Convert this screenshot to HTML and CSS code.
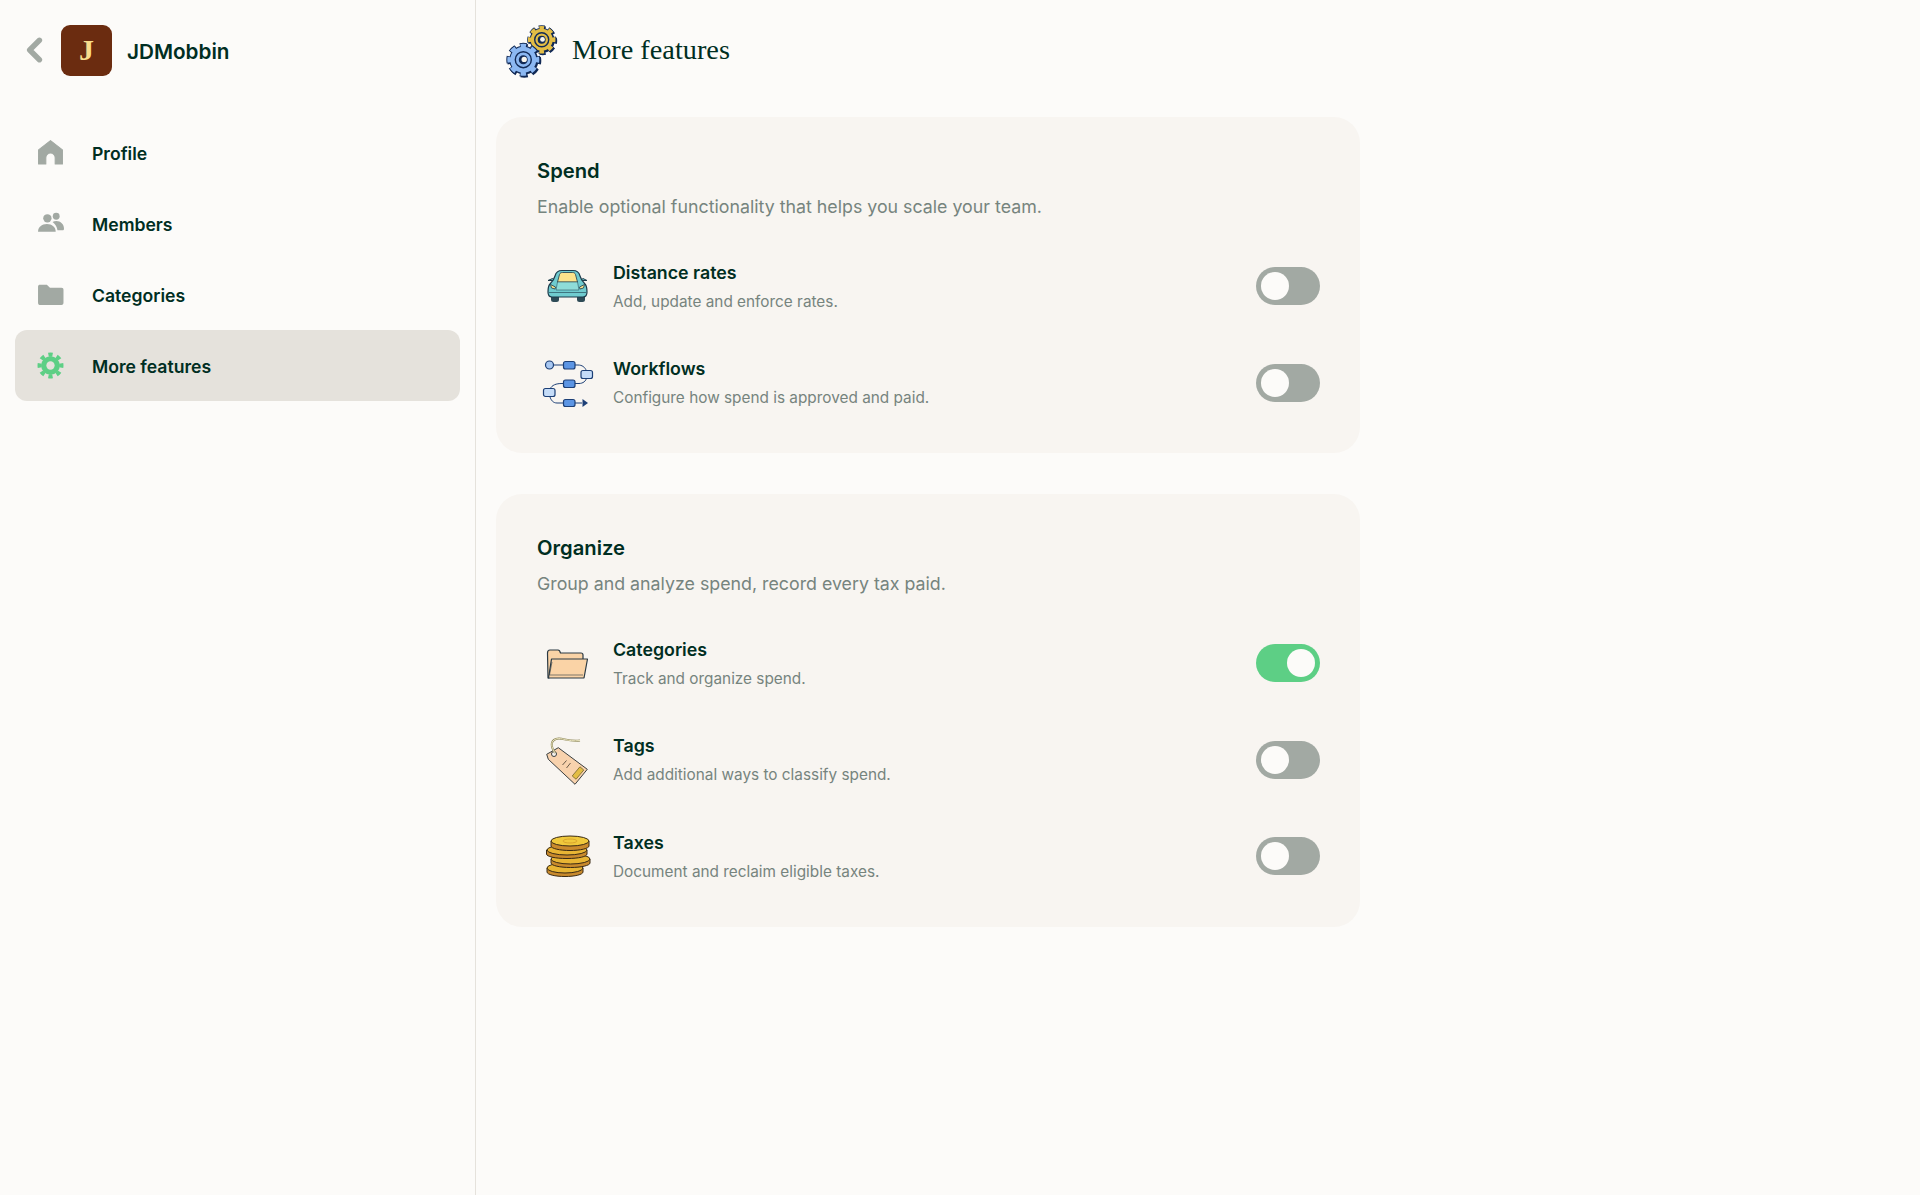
FILE: index.html
```html
<!DOCTYPE html>
<html lang="en">
<head>
    <meta charset="UTF-8">
    <meta name="viewport" content="width=device-width, initial-scale=1.0">
    <title>More features</title>
    <link rel="stylesheet" href="styles.css">
</head>
<body>
    <aside class="sidebar">
        <div class="workspace">
            <svg class="back" viewBox="0 0 16 24"><path d="M13 3 4 12l9 9" fill="none" stroke="#a2a9a3" stroke-width="5" stroke-linecap="round" stroke-linejoin="round"/></svg>
            <div class="avatar">J</div>
            <div class="workspace-name">JDMobbin</div>
        </div>
        <nav class="nav">
            <a class="nav-item">
                <svg class="nav-icon" viewBox="0 0 26 26"><path d="M13 1.500 24.500 10.500V24H17.500V18A4.500 4.500 0 0 0 8.500 18V24H1.500V10.500Z" fill="#a2a9a3" stroke="#a2a9a3" stroke-linejoin="round"/></svg>
                <span>Profile</span>
            </a>
            <a class="nav-item">
                <svg class="nav-icon" viewBox="0 0 26 26"><circle cx="10" cy="8" r="4" fill="#a2a9a3"/><circle cx="18.500" cy="6" r="3.300" fill="#a2a9a3"/><path d="M1 21c0-4.500 3.500-7.500 8.500-7.500s8.500 3 8.500 7.500z" fill="#a2a9a3"/><path d="M15 11.500c1-.7 2.300-1 3.700-1 4 0 7.300 3 7.300 7.500 0 1-.5 1.500-1.500 1.500h-4.800c-.3-3.200-2-6-4.700-8z" fill="#a2a9a3"/></svg>
                <span>Members</span>
            </a>
            <a class="nav-item">
                <svg class="nav-icon" viewBox="0 0 26 26"><path d="M1 5.500C1 4 1.800 3.500 3 3.500H9.500L12.500 6.500H23.500C25 6.500 25.500 7.300 25.500 8.500V21C25.500 22.200 25 23 23.500 23H2.500C1.500 23 1 22.200 1 21Z" fill="#a2a9a3"/></svg>
                <span>Categories</span>
            </a>
            <a class="nav-item nav-item-active">
                <svg class="nav-icon" viewBox="0 0 26 26"><circle cx="13" cy="13" r="9" fill="#5dcf85"/><circle cx="13" cy="13" r="10.500" fill="none" stroke="#5dcf85" stroke-width="4" pathLength="16" stroke-dasharray="1 1" stroke-dashoffset="0.500"/><circle cx="13" cy="13" r="4" fill="#e5e2dc"/></svg>
                <span>More features</span>
            </a>
        </nav>
    </aside>

    <main class="main">
        <header class="page-header">
            <svg class="page-icon" viewBox="0 0 56 56">
                <!-- yellow gear -->
                <g transform="translate(37.700 18.700)">
                    <circle r="12" fill="#122a56"/>
                    <circle r="12" fill="none" stroke="#122a56" stroke-width="5" pathLength="16" stroke-dasharray="1.200 .8" stroke-dashoffset="0.600"/>
                </g>
                <g transform="translate(36.700 17.700)">
                    <circle r="12" fill="#122a56"/>
                    <circle r="12" fill="none" stroke="#122a56" stroke-width="5" pathLength="16" stroke-dasharray="1.200 .8" stroke-dashoffset="0.600"/>
                    <circle r="11" fill="#e3bd45"/>
                    <circle r="12" fill="none" stroke="#e3bd45" stroke-width="3.500" pathLength="16" stroke-dasharray="1 1" stroke-dashoffset="0.500"/>
                    <circle r="7" fill="#e3bd45" stroke="#122a56" stroke-width="1.400"/>
                    <circle r="4" fill="#122a56"/>
                    <circle cx="0.800" cy="-0.300" r="2.400" fill="#f7f5ee"/>
                </g>
                <!-- blue gear -->
                <g transform="translate(19.300 38.700)">
                    <circle r="14" fill="#122a56"/>
                    <circle r="14" fill="none" stroke="#122a56" stroke-width="6" pathLength="16" stroke-dasharray="1.200 .8" stroke-dashoffset="0.600"/>
                </g>
                <g transform="translate(18.300 37.700)">
                    <circle r="14" fill="#122a56"/>
                    <circle r="14" fill="none" stroke="#122a56" stroke-width="6" pathLength="16" stroke-dasharray="1.200 .8" stroke-dashoffset="0.600"/>
                    <circle r="13" fill="#8cb8f2"/>
                    <circle r="14" fill="none" stroke="#8cb8f2" stroke-width="4" pathLength="16" stroke-dasharray="1 1" stroke-dashoffset="0.500"/>
                    <circle r="8" fill="#8cb8f2" stroke="#122a56" stroke-width="1.400"/>
                    <circle r="4.500" fill="#122a56"/>
                    <circle cx="0.900" cy="-0.300" r="2.700" fill="#f7f5ee"/>
                </g>
            </svg>
            <h1 class="page-title">More features</h1>
        </header>

        <section class="card">
            <h2 class="card-title">Spend</h2>
            <p class="card-desc">Enable optional functionality that helps you scale your team.</p>
            <div class="feature">
                <svg class="feature-icon" viewBox="0 0 60 60">
                    <rect x="14" y="38" width="8" height="8" rx="2.500" fill="#2d4a56"/>
                    <rect x="40" y="38" width="8" height="8" rx="2.500" fill="#2d4a56"/>
                    <path d="M11 24.500 15.500 22.500 18 24.500ZM50 24.500 46 22.500 43.500 24.500Z" fill="#6fc9c9" stroke="#1d3a4a" stroke-linejoin="round"/>
                    <path d="M13 28C15 26 17 24 18 20 19 16 21 14.500 25 14.500H36C40 14.500 42 16 43 20 44 24 46 26 48 28 50 30 50 32 50 36 50 39 49 41 46 41H15C12 41 11 39 11 36 11 32 11 30 13 28Z" fill="#6fcbcf" stroke="#1d3a4a" stroke-width="1.200"/>
                    <path d="M20.500 26 22.500 18.500C23 17 24 16.500 25.500 16.500H35.500C37 16.500 38 17 38.500 18.500L40.500 26Z" fill="#fbe38b" stroke="#1d3a4a" stroke-width=".8"/>
                    <path d="M20.500 26H40.500L42 34H19Z" fill="#8edcd8" stroke="#1d3a4a" stroke-width=".5"/>
                    <path d="M13.500 28.500 18.500 31 18 33 14.500 32Z M47.500 28.500 42.500 31 43 33 46.500 32Z" fill="#fbe38b" stroke="#1d3a4a" stroke-width=".8"/>
                    <path d="M12 36.500H49" fill="none" stroke="#1d3a4a" stroke-width=".6"/>
                </svg>
                <div class="feature-text">
                    <div class="feature-title">Distance rates</div>
                    <div class="feature-desc">Add, update and enforce rates.</div>
                </div>
                <div class="toggle"><div class="knob"></div></div>
            </div>
            <div class="feature">
                <svg class="feature-icon" viewBox="0 0 60 60">
                    <path d="M12 12H38H41C45 12 48 14 49.500 18M49.500 25C49 28 46 30.500 42 30.500H25C19 30.500 15 32 13 36M13 44C14 47 16 50 20 50H45" fill="none" stroke="#1c3f76" stroke-width="1"/>
                    <circle cx="12.500" cy="12" r="4" fill="#a9c8f2" stroke="#1c3f76" stroke-width="1.200"/>
                    <rect x="26.500" y="8.500" width="11.500" height="7.500" rx="2" fill="#5c95e4" stroke="#1c3f76" stroke-width="1.200"/>
                    <rect x="44" y="17.500" width="11.500" height="8" rx="2" fill="#c5dcf8" stroke="#1c3f76" stroke-width="1.200"/>
                    <rect x="26.500" y="27" width="11.500" height="7.500" rx="2" fill="#5c95e4" stroke="#1c3f76" stroke-width="1.200"/>
                    <rect x="6.500" y="35.500" width="11.500" height="8" rx="2" fill="#c5dcf8" stroke="#1c3f76" stroke-width="1.200"/>
                    <rect x="26.500" y="46.500" width="11.500" height="7" rx="2" fill="#5c95e4" stroke="#1c3f76" stroke-width="1.200"/>
                    <path d="M45.500 46 51 50 45.500 54Z" fill="#1c3f76"/>
                </svg>
                <div class="feature-text">
                    <div class="feature-title">Workflows</div>
                    <div class="feature-desc">Configure how spend is approved and paid.</div>
                </div>
                <div class="toggle"><div class="knob"></div></div>
            </div>
        </section>

        <section class="card">
            <h2 class="card-title">Organize</h2>
            <p class="card-desc">Group and analyze spend, record every tax paid.</p>
            <div class="feature">
                <svg class="feature-icon" viewBox="0 0 60 60">
                    <path d="M11 45 10.500 20C10.500 18 11.500 17 13 17H21C22.500 17 23 18 23.500 20H44C45.500 20 46 21 46 22V27H15L12 45Z" fill="#fad3a6" stroke="#2b3a44" stroke-width="1.200" stroke-linejoin="round"/>
                    <path d="M14.500 26H50.500L47 45H11.500Z" fill="#fad3a6" stroke="#2b3a44" stroke-width="1.200" stroke-linejoin="round"/>
                    <path d="M15 29 12.500 42H46" fill="none" stroke="#2b3a44" stroke-width=".6"/>
                </svg>
                <div class="feature-text">
                    <div class="feature-title">Categories</div>
                    <div class="feature-desc">Track and organize spend.</div>
                </div>
                <div class="toggle toggle-on"><div class="knob"></div></div>
            </div>
            <div class="feature">
                <svg class="feature-icon" viewBox="0 0 60 60">
                    <path d="M9.700 24.300 21.300 17.700 50.300 39.300 38 54.300 11.300 29.300Z" fill="#f8d2ad" stroke="#3a3f40" stroke-width="1" stroke-linejoin="round"/>
                    <circle cx="17" cy="24" r="2.500" fill="#f8f4f0" stroke="#3a3f40" stroke-width="1"/>
                    <path d="M18 23C14 17 13 11 19 9 25 7 30 12 43 10.500" fill="none" stroke="#8a8455" stroke-width="2"/>
                    <path d="M18 23C14 17 13 11 19 9 25 7 30 12 43 10.500" fill="none" stroke="#ece6c2" stroke-width="1"/>
                    <rect x="35" y="40.500" width="12" height="5" fill="#e3bd45" stroke="#6f6128" stroke-width=".7" transform="rotate(-50 41 43)"/>
                    <path d="M25.500 35 29.500 30.500M29.500 38 33.500 33" fill="none" stroke="#6a5a48" stroke-width="1"/>
                </svg>
                <div class="feature-text">
                    <div class="feature-title">Tags</div>
                    <div class="feature-desc">Add additional ways to classify spend.</div>
                </div>
                <div class="toggle"><div class="knob"></div></div>
            </div>
            <div class="feature">
                <svg class="feature-icon" viewBox="0 0 60 60">
                    <g stroke="#3a2a14" stroke-width="1">
                        <path d="M10 42V46C10 48.500 18 50.500 28 50.500S46 48.500 46 46V42Z" fill="#c98a2c"/>
                        <ellipse cx="28" cy="42" rx="18" ry="5" fill="#e8b534"/>
                        <path d="M14 33V37C14 39.500 23 41.500 33.500 41.500S53 39.500 53 37V33Z" fill="#c98a2c"/>
                        <ellipse cx="33.500" cy="33" rx="19.500" ry="5" fill="#e8b534"/>
                        <path d="M9.500 24V28C9.500 30.500 18 32.500 30 32.500S50 30.500 50 28V24Z" fill="#c98a2c"/>
                        <ellipse cx="30" cy="24" rx="20" ry="5" fill="#e8b534"/>
                        <path d="M14 15V20C14 22.500 23 24.500 33 24.500S52 22.500 52 20V15Z" fill="#c98a2c"/>
                        <ellipse cx="33" cy="15" rx="19" ry="5" fill="#f0c93c"/>
                    </g>
                    <ellipse cx="33" cy="15" rx="7" ry="2" fill="none" stroke="#d9a52d" stroke-width="1"/>
                </svg>
                <div class="feature-text">
                    <div class="feature-title">Taxes</div>
                    <div class="feature-desc">Document and reclaim eligible taxes.</div>
                </div>
                <div class="toggle"><div class="knob"></div></div>
            </div>
        </section>
    </main>
</body>
</html>
```

FILE: styles.css
```css
* {
    box-sizing: border-box;
}

body {
    margin: 0;
    height: 1195px;
    display: flex;
    font-family: Inter, "Liberation Sans", sans-serif;
    background-color: #fcfbf9;
    color: #002e22;
}

.sidebar {
    width: 476px;
    flex-shrink: 0;
    padding: 0 15px;
    border-right: 1px solid #e5e2dc;
}

.workspace {
    height: 100px;
    padding-left: 10px;
    display: flex;
    align-items: center;
}

.back {
    width: 18px;
    height: 26px;
    margin-right: 18px;
}

.avatar {
    width: 51px;
    height: 51px;
    border-radius: 9px;
    background-color: #6b2c10;
    color: #f8dd8c;
    font-family: "Liberation Serif", serif;
    font-size: 30px;
    font-weight: 700;
    display: flex;
    align-items: center;
    justify-content: center;
    margin-right: 15px;
}

.workspace-name {
    padding-top: 2px;
    font-size: 20.700px;
    font-weight: 600;
}

.nav {
    margin-top: 17px;
}

.nav-item {
    height: 71px;
    padding-left: 22px;
    display: flex;
    align-items: center;
    gap: 28px;
    font-size: 17.600px;
    font-weight: 600;
    border-radius: 12px;
}

.nav-item span {
    padding-top: 1px;
}

.nav-item-active {
    background-color: #e5e2dc;
}

.nav-icon {
    width: 27px;
    height: 27px;
}

.main {
    flex: 1;
    padding: 0 20px;
}

.page-header {
    height: 100px;
    padding-left: 9px;
    display: flex;
    align-items: center;
    gap: 11px;
}

.page-icon {
    width: 56px;
    height: 56px;
}

.page-title {
    margin: 0;
    font-family: "Liberation Serif", serif;
    font-size: 28.300px;
    font-weight: 400;
}

.card {
    width: 864px;
    margin-top: 17px;
    margin-bottom: 41px;
    padding: 40px 40px 22px 41px;
    background-color: #f8f5f1;
    border-radius: 26px;
}

.card + .card {
    margin-top: 0;
}

.card-title {
    margin: 0;
    font-size: 20.200px;
    line-height: 28px;
    font-weight: 600;
}

.card-desc {
    margin: 8px 0 17px;
    font-size: 17.800px;
    line-height: 28px;
    color: #76847e;
}

.feature {
    height: 96.500px;
    display: flex;
    align-items: center;
}

.feature-icon {
    width: 60px;
    height: 60px;
    margin-right: 16px;
    flex-shrink: 0;
}

.feature-text {
    flex: 1;
    padding-top: 2px;
}

.feature-title {
    font-size: 17.800px;
    line-height: 24px;
    font-weight: 600;
}

.feature-desc {
    margin-top: 5px;
    font-size: 15.350px;
    line-height: 24px;
    color: #76847e;
}

.toggle {
    width: 64px;
    height: 38px;
    padding: 5px;
    border-radius: 19px;
    background-color: #a2a9a3;
}

.toggle-on {
    display: flex;
    justify-content: flex-end;
    background-color: #5dcf85;
}

.knob {
    width: 28px;
    height: 28px;
    border-radius: 50%;
    background-color: #fcfbf9;
}
```
